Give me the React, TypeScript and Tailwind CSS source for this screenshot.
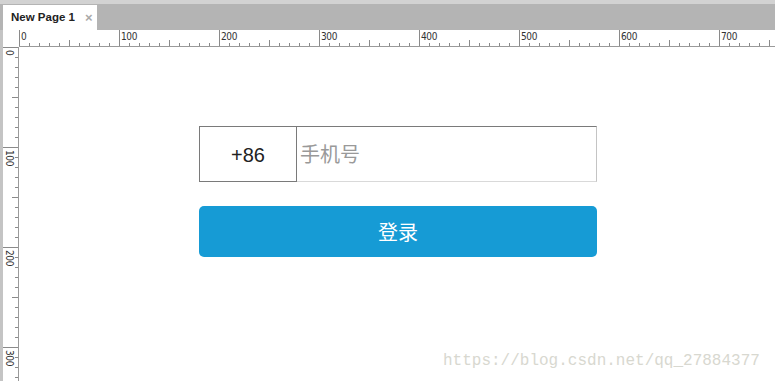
import React from "react";

const hTicks = Array.from({ length: 76 }, (_, i) => i);
const vTicks = Array.from({ length: 34 }, (_, i) => i);

function HRuler() {
  return (
    <svg width="756" height="16" className="block">
      {hTicks.map((i) => {
        const x = i * 10 + 0.5;
        const len = i % 10 === 0 ? 16 : i % 5 === 0 ? 6 : 3;
        return <line key={i} x1={x} x2={x} y1={16 - len} y2={16} stroke="#8a8a8a" strokeWidth="1" />;
      })}
      {hTicks
        .filter((i) => i % 10 === 0)
        .map((i) => (
          <text key={"t" + i} x={i * 10 + 2} y={10} fontSize="10" fill="#333" fontFamily="'DejaVu Sans Condensed', 'Liberation Sans', sans-serif" letterSpacing="-0.4">
            {i * 10}
          </text>
        ))}
    </svg>
  );
}

function VRuler() {
  return (
    <svg width="15" height="334" className="block">
      {vTicks.map((i) => {
        const y = i * 10 + 0.5;
        const len = i % 10 === 0 ? 15 : i % 5 === 0 ? 6 : 3;
        return <line key={i} y1={y} y2={y} x1={15 - len} x2={15} stroke="#8a8a8a" strokeWidth="1" />;
      })}
      {vTicks
        .filter((i) => i % 10 === 0)
        .map((i) => (
          <text
            key={"t" + i}
            x={0}
            y={0}
            fontSize="10"
            fill="#333"
            fontFamily="'DejaVu Sans Condensed', 'Liberation Sans', sans-serif"
            letterSpacing="-0.4"
            transform={`translate(3 ${i * 10 + 3}) rotate(90)`}
          >
            {i * 10}
          </text>
        ))}
    </svg>
  );
}

export default function App() {
  return (
    <div className="relative w-[775px] h-[381px] overflow-hidden bg-white font-['Liberation_Sans','Noto_Sans_CJK_SC',sans-serif]">
      {/* tab bar */}
      <div className="h-[30px] bg-[#b4b4b4] border-t-4 border-[#d2d2d2] flex items-end pl-[3px]">
        <div className="h-[25px] w-[94px] bg-white flex items-center pl-[8px] gap-[10px]">
          <span className="text-[11.5px] font-bold text-[#222]">New Page 1</span>
          <span className="text-[13px] font-bold text-[#aaa] leading-none">×</span>
        </div>
      </div>

      {/* top ruler row */}
      <div className="flex h-[17px]">
        <div className="w-[19px] border-l-[3px] border-[#c4c4c4] bg-white" />
        <div className="flex-1 border-b border-[#9a9a9a] bg-white">
          <HRuler />
        </div>
      </div>

      {/* body */}
      <div className="flex h-[334px]">
        <div className="w-[19px] flex border-l-[3px] border-[#c4c4c4] border-r border-r-[#9a9a9a] bg-white">
          <VRuler />
        </div>
        <div className="flex-1 pt-[79px] pl-[180px]">
          <div className="w-[398px] flex flex-col gap-[24px]">
            <div className="flex h-[56px]">
              <div className="w-[98px] border border-[#7a7a7a] flex items-center justify-center pt-[2px] text-[20px] text-[#222]">
                +86
              </div>
              <div className="flex-1 border-t border-t-[#7a7a7a] border-r border-r-[#c4c4c4] border-b border-b-[#d9d9d9] flex items-center pl-[3px] pt-[2px] text-[20px] text-[#999]">
                手机号
              </div>
            </div>
            <button className="h-[51px] rounded-[5px] bg-[#169bd5] text-white text-[20px] pt-[3px]">登录</button>
          </div>
        </div>
      </div>

      <div className="absolute left-[443px] top-[349px] text-[16px] text-[#d8d8d0] font-['Liberation_Mono',monospace]">
        https://blog.csdn.net/qq_27884377
      </div>
    </div>
  );
}
